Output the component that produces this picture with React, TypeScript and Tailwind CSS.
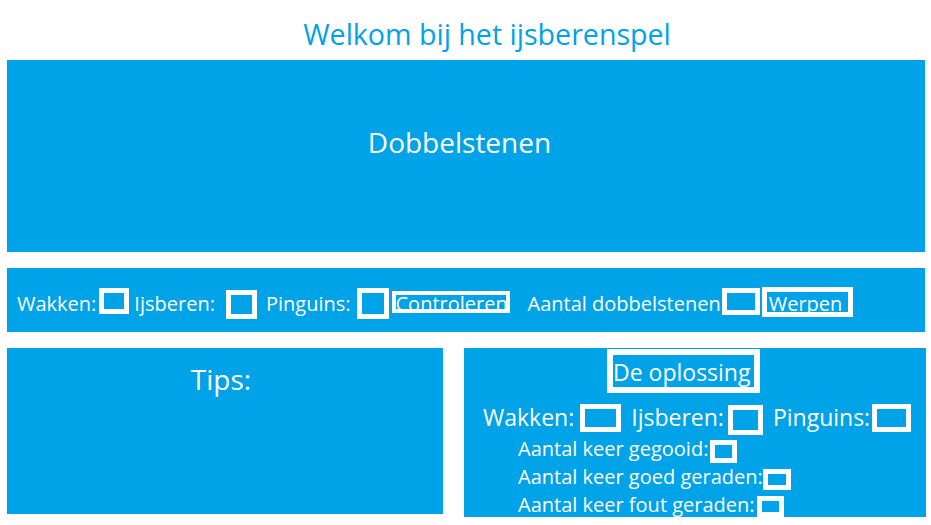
export default function App() {
  return (
    <div className="h-[525px] w-[931px] overflow-hidden bg-white font-['Open_Sans',sans-serif] text-white">
      <h1 className="h-[60px] pt-[15px] pl-[43px] text-center text-[28.6px] font-normal leading-[38px] text-[#00a2e8]">
        Welkom bij het ijsberenspel
      </h1>

      <div className="flex flex-col gap-4 pl-[7px]">
        {/* dobbelstenen */}
        <section className="h-[192px] w-[918px] bg-[#00a2e8] pt-[63px] pr-[13px] text-center text-[28px] leading-[38px]">
          Dobbelstenen
        </section>

        {/* invoer */}
        <section className="flex h-[64px] w-[918px] items-start bg-[#00a2e8] pl-[10px] text-[20px] leading-[27px]">
          <label className="mt-[22px]">Wakken:</label>
          <input type="text" className="ml-[3px] mt-[20px] h-[26px] w-[30px] border-[5px] border-white bg-transparent outline-none" />
          <label className="ml-[5px] mt-[22px]">Ijsberen:</label>
          <input type="text" className="ml-[11px] mt-[22px] h-[29px] w-[31px] border-[5px] border-white bg-transparent outline-none" />
          <label className="ml-[9px] mt-[22px]">Pinguins:</label>
          <input type="text" className="ml-[6px] mt-[20px] h-[31px] w-[32px] border-[5px] border-white bg-transparent outline-none" />
          <button className="ml-[3px] mt-[23px] flex h-[22px] w-[118px] items-start overflow-visible border-4 border-white leading-[17px]">
            Controleren
          </button>
          <label className="ml-[18px] mt-[22px]">Aantal dobbelstenen</label>
          <input type="text" className="ml-[1px] mt-[20px] h-[27px] w-[38px] border-[5px] border-white bg-transparent outline-none" />
          <button className="ml-[2px] mt-[19px] flex h-[30px] w-[91px] items-start overflow-visible border-[5px] border-white pl-[2px] leading-[23px]">
            Werpen
          </button>
        </section>

        <div className="flex items-start">
          {/* tips */}
          <section className="h-[166px] w-[436px] bg-[#00a2e8] pt-[12px] pr-[8px] text-center text-[28px] leading-[38px]">
            Tips:
          </section>

          {/* oplossing */}
          <section className="ml-[21px] w-[462px] bg-[#00a2e8] pt-px">
            <button className="ml-[143px] flex h-[44px] w-[153px] items-start border-[6px] border-white pt-px text-[23px] leading-[32px]">
              De oplossing
            </button>

            <div className="mt-[8px] flex h-[34px] items-start pl-[19px] text-[23px] leading-[31px]">
              <span className="mt-px">Wakken:</span>
              <input type="text" className="ml-[6px] mt-[3px] h-[28px] w-[41px] border-[5px] border-white bg-transparent outline-none" />
              <span className="ml-[10px] mt-px">Ijsberen:</span>
              <input type="text" className="ml-[4px] mt-[4px] h-[30px] w-[35px] border-[5px] border-white bg-transparent outline-none" />
              <span className="ml-[10px] mt-px">Pinguins:</span>
              <input type="text" className="ml-[2px] mt-[3px] h-[28px] w-[39px] border-[5px] border-white bg-transparent outline-none" />
            </div>

            <div className="pl-[54px] text-[20px] leading-[27px]">
              <div className="flex h-[28px] items-start">
                <span>Aantal keer gegooid:</span>
                <input type="text" className="ml-[2px] mt-[5px] h-[23px] w-[27px] border-[5px] border-white bg-transparent outline-none" />
              </div>
              <div className="flex h-[28px] items-start">
                <span>Aantal keer goed geraden:</span>
                <input type="text" className="ml-0 mt-[6px] h-[21px] w-[28px] border-[5px] border-white bg-transparent outline-none" />
              </div>
              <div className="flex h-[26px] items-start">
                <span>Aantal keer fout geraden:</span>
                <input type="text" className="ml-[2px] mt-[5px] h-[21px] w-[27px] border-[5px] border-white bg-transparent outline-none" />
              </div>
            </div>
          </section>
        </div>
      </div>
    </div>
  );
}
